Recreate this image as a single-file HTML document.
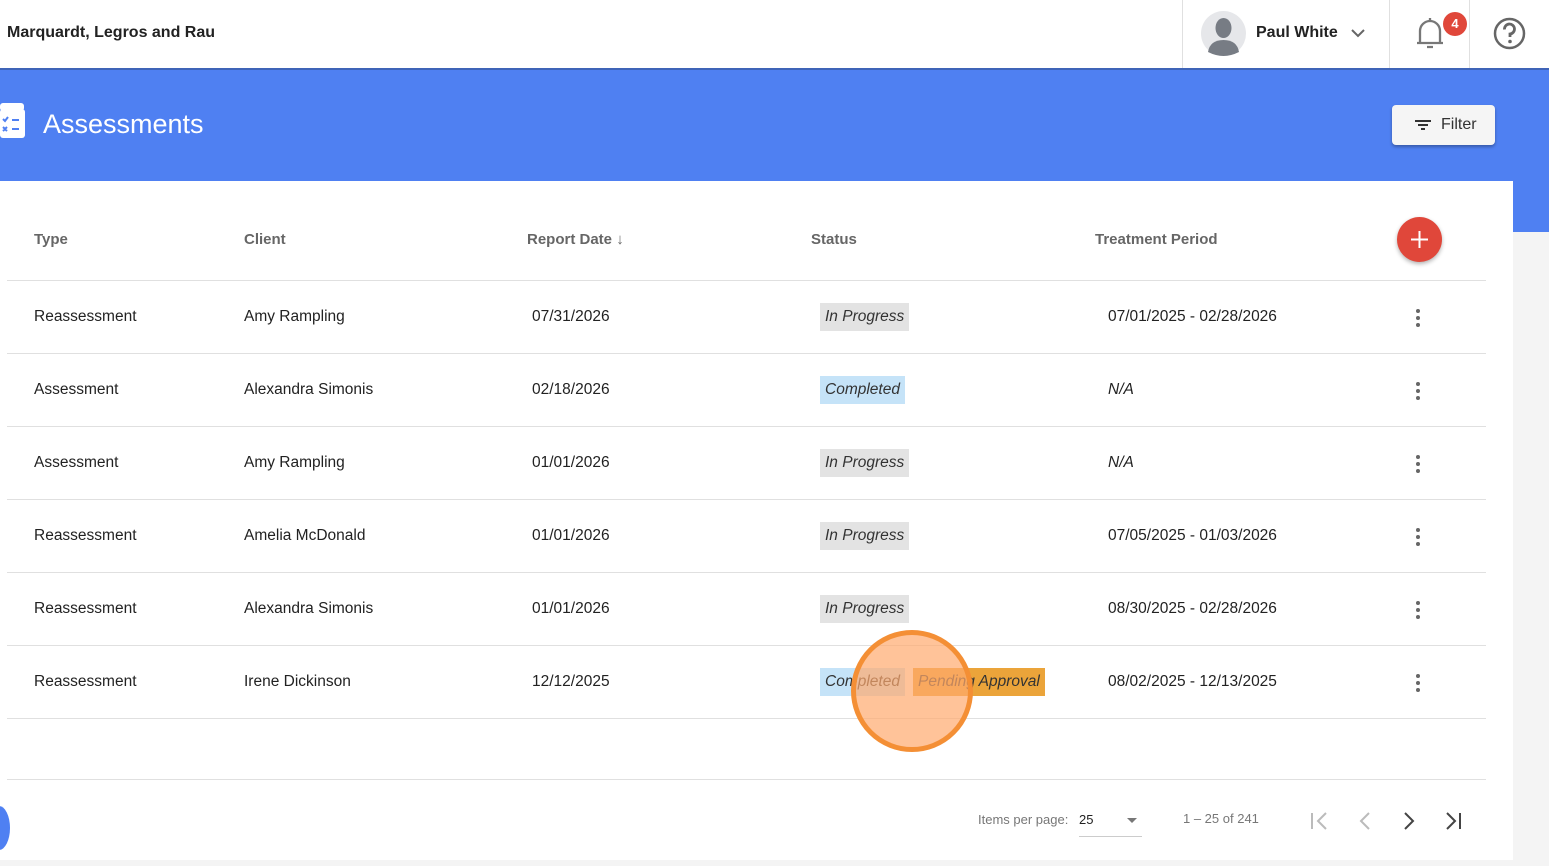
<!DOCTYPE html>
<html><head><meta charset="utf-8"><style>
*{box-sizing:border-box;margin:0;padding:0}
body{width:1549px;height:866px;overflow:hidden;background:#f4f4f4;font-family:"Liberation Sans",sans-serif;position:relative;color:#222}
.hdr{position:absolute;left:0;top:0;width:1549px;height:70px;background:#fff;border-bottom:2px solid #3f64b8}
.abs{position:absolute}
.band{position:absolute;left:0;top:70px;width:1549px;height:111px;background:#4f80f2}
.band2{position:absolute;left:1513px;top:181px;width:36px;height:51px;background:#4f80f2}
.card{position:absolute;left:0;top:181px;width:1513px;height:679px;background:#fff}
.line{position:absolute;left:7px;width:1479px;height:1px;background:#e0e0e0}
.th{position:absolute;top:231px;font-size:15px;font-weight:bold;color:#666}
.td{position:absolute;font-size:15.5px;color:#222}
.chip{position:absolute;font-size:15.5px;font-style:italic;height:28px;line-height:28px;padding:0 5px;color:#333}
.kb{position:absolute;left:1416px;width:4px}
.kb i{display:block;width:4px;height:4px;border-radius:50%;background:#666;margin-bottom:3px}
</style></head><body>
<div class="hdr">
<div class="abs" style="left:7px;top:24px;font-size:16px;font-weight:bold;color:#222">Marquardt, Legros and Rau</div>
<div class="abs" style="left:1182px;top:0;width:1px;height:68px;background:#e0e0e0"></div>
<div class="abs" style="left:1389px;top:0;width:1px;height:68px;background:#e0e0e0"></div>
<div class="abs" style="left:1469px;top:0;width:1px;height:68px;background:#e0e0e0"></div>
<svg class="abs" style="left:1201px;top:11px" width="45" height="45" viewBox="0 0 45 45"><circle cx="22.5" cy="22.5" r="22.5" fill="#e6e7ea"/><ellipse cx="22.5" cy="17" rx="8" ry="10" fill="#777c84"/><path d="M7 41 Q9 29 22.5 29 Q36 29 38 41 Q30 45 22.5 45 Q15 45 7 41Z" fill="#777c84"/></svg>
<div class="abs" style="left:1256px;top:24px;font-size:16px;font-weight:bold;color:#222">Paul White</div>
<svg class="abs" style="left:1350px;top:27px" width="16" height="12" viewBox="0 0 16 12"><path d="M2 3 L8 9 L14 3" stroke="#666" stroke-width="2" fill="none"/></svg>
<svg class="abs" style="left:1413px;top:16px" width="34" height="34" viewBox="0 0 34 34"><path d="M4 27 L30 27 M7 27 V15 A10 10 0 0 1 27 15 V27 M14 31 H20" stroke="#777" stroke-width="2.3" fill="none"/><path d="M17 2v3" stroke="#777" stroke-width="2.3"/></svg>
<div class="abs" style="left:1443px;top:12px;width:24px;height:24px;border-radius:50%;background:#e0473a;color:#fff;font-size:13px;font-weight:bold;text-align:center;line-height:24px">4</div>
<svg class="abs" style="left:1493px;top:17px" width="33" height="33" viewBox="0 0 33 33"><circle cx="16.5" cy="16.5" r="14.5" stroke="#666" stroke-width="2.5" fill="none"/><path d="M11.5 12.5 A5 5 0 1 1 17 17 V20" stroke="#666" stroke-width="2.8" fill="none"/><circle cx="17" cy="24.5" r="1.8" fill="#666"/></svg>
</div>
<div class="band"></div><div class="band2"></div>
<svg class="abs" style="left:0;top:103px" width="26" height="36" viewBox="0 0 26 36"><rect x="0" y="0" width="24" height="8" rx="3" fill="#fff"/><rect x="0" y="6" width="25" height="29" rx="3" fill="#fff"/><path d="M3 16l2 2 3-4M3 24l4 4M7 24l-4 4M12 17h7M12 26h7" stroke="#4f80f2" stroke-width="2" fill="none"/></svg>
<div class="abs" style="left:43px;top:109px;font-size:27px;color:#fff">Assessments</div>
<div class="abs" style="left:1392px;top:105px;width:103px;height:40px;background:#f5f5f5;border-radius:4px;box-shadow:0 2px 3px rgba(0,0,0,.3)"></div>
<svg class="abs" style="left:1414px;top:118px" width="18" height="14" viewBox="0 0 18 14"><path d="M1 3h16M4 7h10M7 11h4" stroke="#333" stroke-width="2"/></svg>
<div class="abs" style="left:1441px;top:116px;font-size:16px;color:#333">Filter</div>
<div class="card"></div>
<div class="th" style="left:34px">Type</div>
<div class="th" style="left:244px">Client</div>
<div class="th" style="left:527px">Report Date <span style="font-weight:normal">&#8595;</span></div>
<div class="th" style="left:811px">Status</div>
<div class="th" style="left:1095px">Treatment Period</div>
<div class="abs" style="left:1397px;top:217px;width:45px;height:45px;border-radius:50%;background:#e0473a;box-shadow:0 2px 4px rgba(0,0,0,.3)"></div>
<svg class="abs" style="left:1409px;top:229px" width="21" height="21"><path d="M10.5 2v17M2 10.5h17" stroke="#fff" stroke-width="2"/></svg>
<div class="line" style="top:280px"></div><div class="line" style="top:353px"></div><div class="line" style="top:426px"></div><div class="line" style="top:499px"></div><div class="line" style="top:572px"></div><div class="line" style="top:645px"></div><div class="line" style="top:718px"></div><div class="line" style="top:779px"></div>

<div class="td" style="left:34px;top:308px">Reassessment</div><div class="td" style="left:244px;top:308px">Amy Rampling</div><div class="td" style="left:532px;top:308px">07/31/2026</div>
<div class="chip" style="left:820px;top:303px;background:#e3e3e3">In Progress</div><div class="td" style="left:1108px;top:308px">07/01/2025 - 02/28/2026</div>
<div class="kb" style="top:309px"><i></i><i></i><i></i></div>

<div class="td" style="left:34px;top:381px">Assessment</div><div class="td" style="left:244px;top:381px">Alexandra Simonis</div><div class="td" style="left:532px;top:381px">02/18/2026</div>
<div class="chip" style="left:820px;top:376px;background:#c5e3f8">Completed</div><div class="td" style="left:1108px;top:381px;font-style:italic">N/A</div>
<div class="kb" style="top:382px"><i></i><i></i><i></i></div>

<div class="td" style="left:34px;top:454px">Assessment</div><div class="td" style="left:244px;top:454px">Amy Rampling</div><div class="td" style="left:532px;top:454px">01/01/2026</div>
<div class="chip" style="left:820px;top:449px;background:#e3e3e3">In Progress</div><div class="td" style="left:1108px;top:454px;font-style:italic">N/A</div>
<div class="kb" style="top:455px"><i></i><i></i><i></i></div>

<div class="td" style="left:34px;top:527px">Reassessment</div><div class="td" style="left:244px;top:527px">Amelia McDonald</div><div class="td" style="left:532px;top:527px">01/01/2026</div>
<div class="chip" style="left:820px;top:522px;background:#e3e3e3">In Progress</div><div class="td" style="left:1108px;top:527px">07/05/2025 - 01/03/2026</div>
<div class="kb" style="top:528px"><i></i><i></i><i></i></div>

<div class="td" style="left:34px;top:600px">Reassessment</div><div class="td" style="left:244px;top:600px">Alexandra Simonis</div><div class="td" style="left:532px;top:600px">01/01/2026</div>
<div class="chip" style="left:820px;top:595px;background:#e3e3e3">In Progress</div><div class="td" style="left:1108px;top:600px">08/30/2025 - 02/28/2026</div>
<div class="kb" style="top:601px"><i></i><i></i><i></i></div>

<div class="td" style="left:34px;top:673px">Reassessment</div><div class="td" style="left:244px;top:673px">Irene Dickinson</div><div class="td" style="left:532px;top:673px">12/12/2025</div>
<div class="chip" style="left:820px;top:668px;background:#c5e3f8">Completed</div>
<div class="chip" style="left:913px;top:668px;background:#eba43a">Pending Approval</div>
<div class="td" style="left:1108px;top:673px">08/02/2025 - 12/13/2025</div>
<div class="kb" style="top:674px"><i></i><i></i><i></i></div>
<div class="abs" style="left:851px;top:630px;width:122px;height:122px;border-radius:50%;background:rgba(255,170,110,.7);border:5px solid #f48f35"></div>

<div class="abs" style="left:978px;top:812px;font-size:13px;color:#777">Items per page:</div>
<div class="abs" style="left:1079px;top:812px;font-size:13px;color:#222">25</div>
<div class="abs" style="left:1079px;top:836px;width:63px;height:1px;background:#ccc"></div>
<svg class="abs" style="left:1126px;top:816px" width="12" height="8"><path d="M1 2h10L6 7z" fill="#777"/></svg>
<div class="abs" style="left:1183px;top:811px;font-size:13px;color:#777">1 – 25 of 241</div>
<svg class="abs" style="left:1305px;top:808px" width="170" height="26" viewBox="0 0 170 26"><g fill="none" stroke-width="2"><path d="M7 5v16M21 5l-8 8 8 8" stroke="#bbb"/><path d="M64 5l-8 8 8 8" stroke="#bbb"/><path d="M100 5l8 8-8 8" stroke="#444"/><path d="M142 5l8 8-8 8M155 5v16" stroke="#444"/></g></svg>
<div class="abs" style="left:-12px;top:806px;width:22px;height:44px;border-radius:50%;background:#4f80f2"></div>
</body></html>
